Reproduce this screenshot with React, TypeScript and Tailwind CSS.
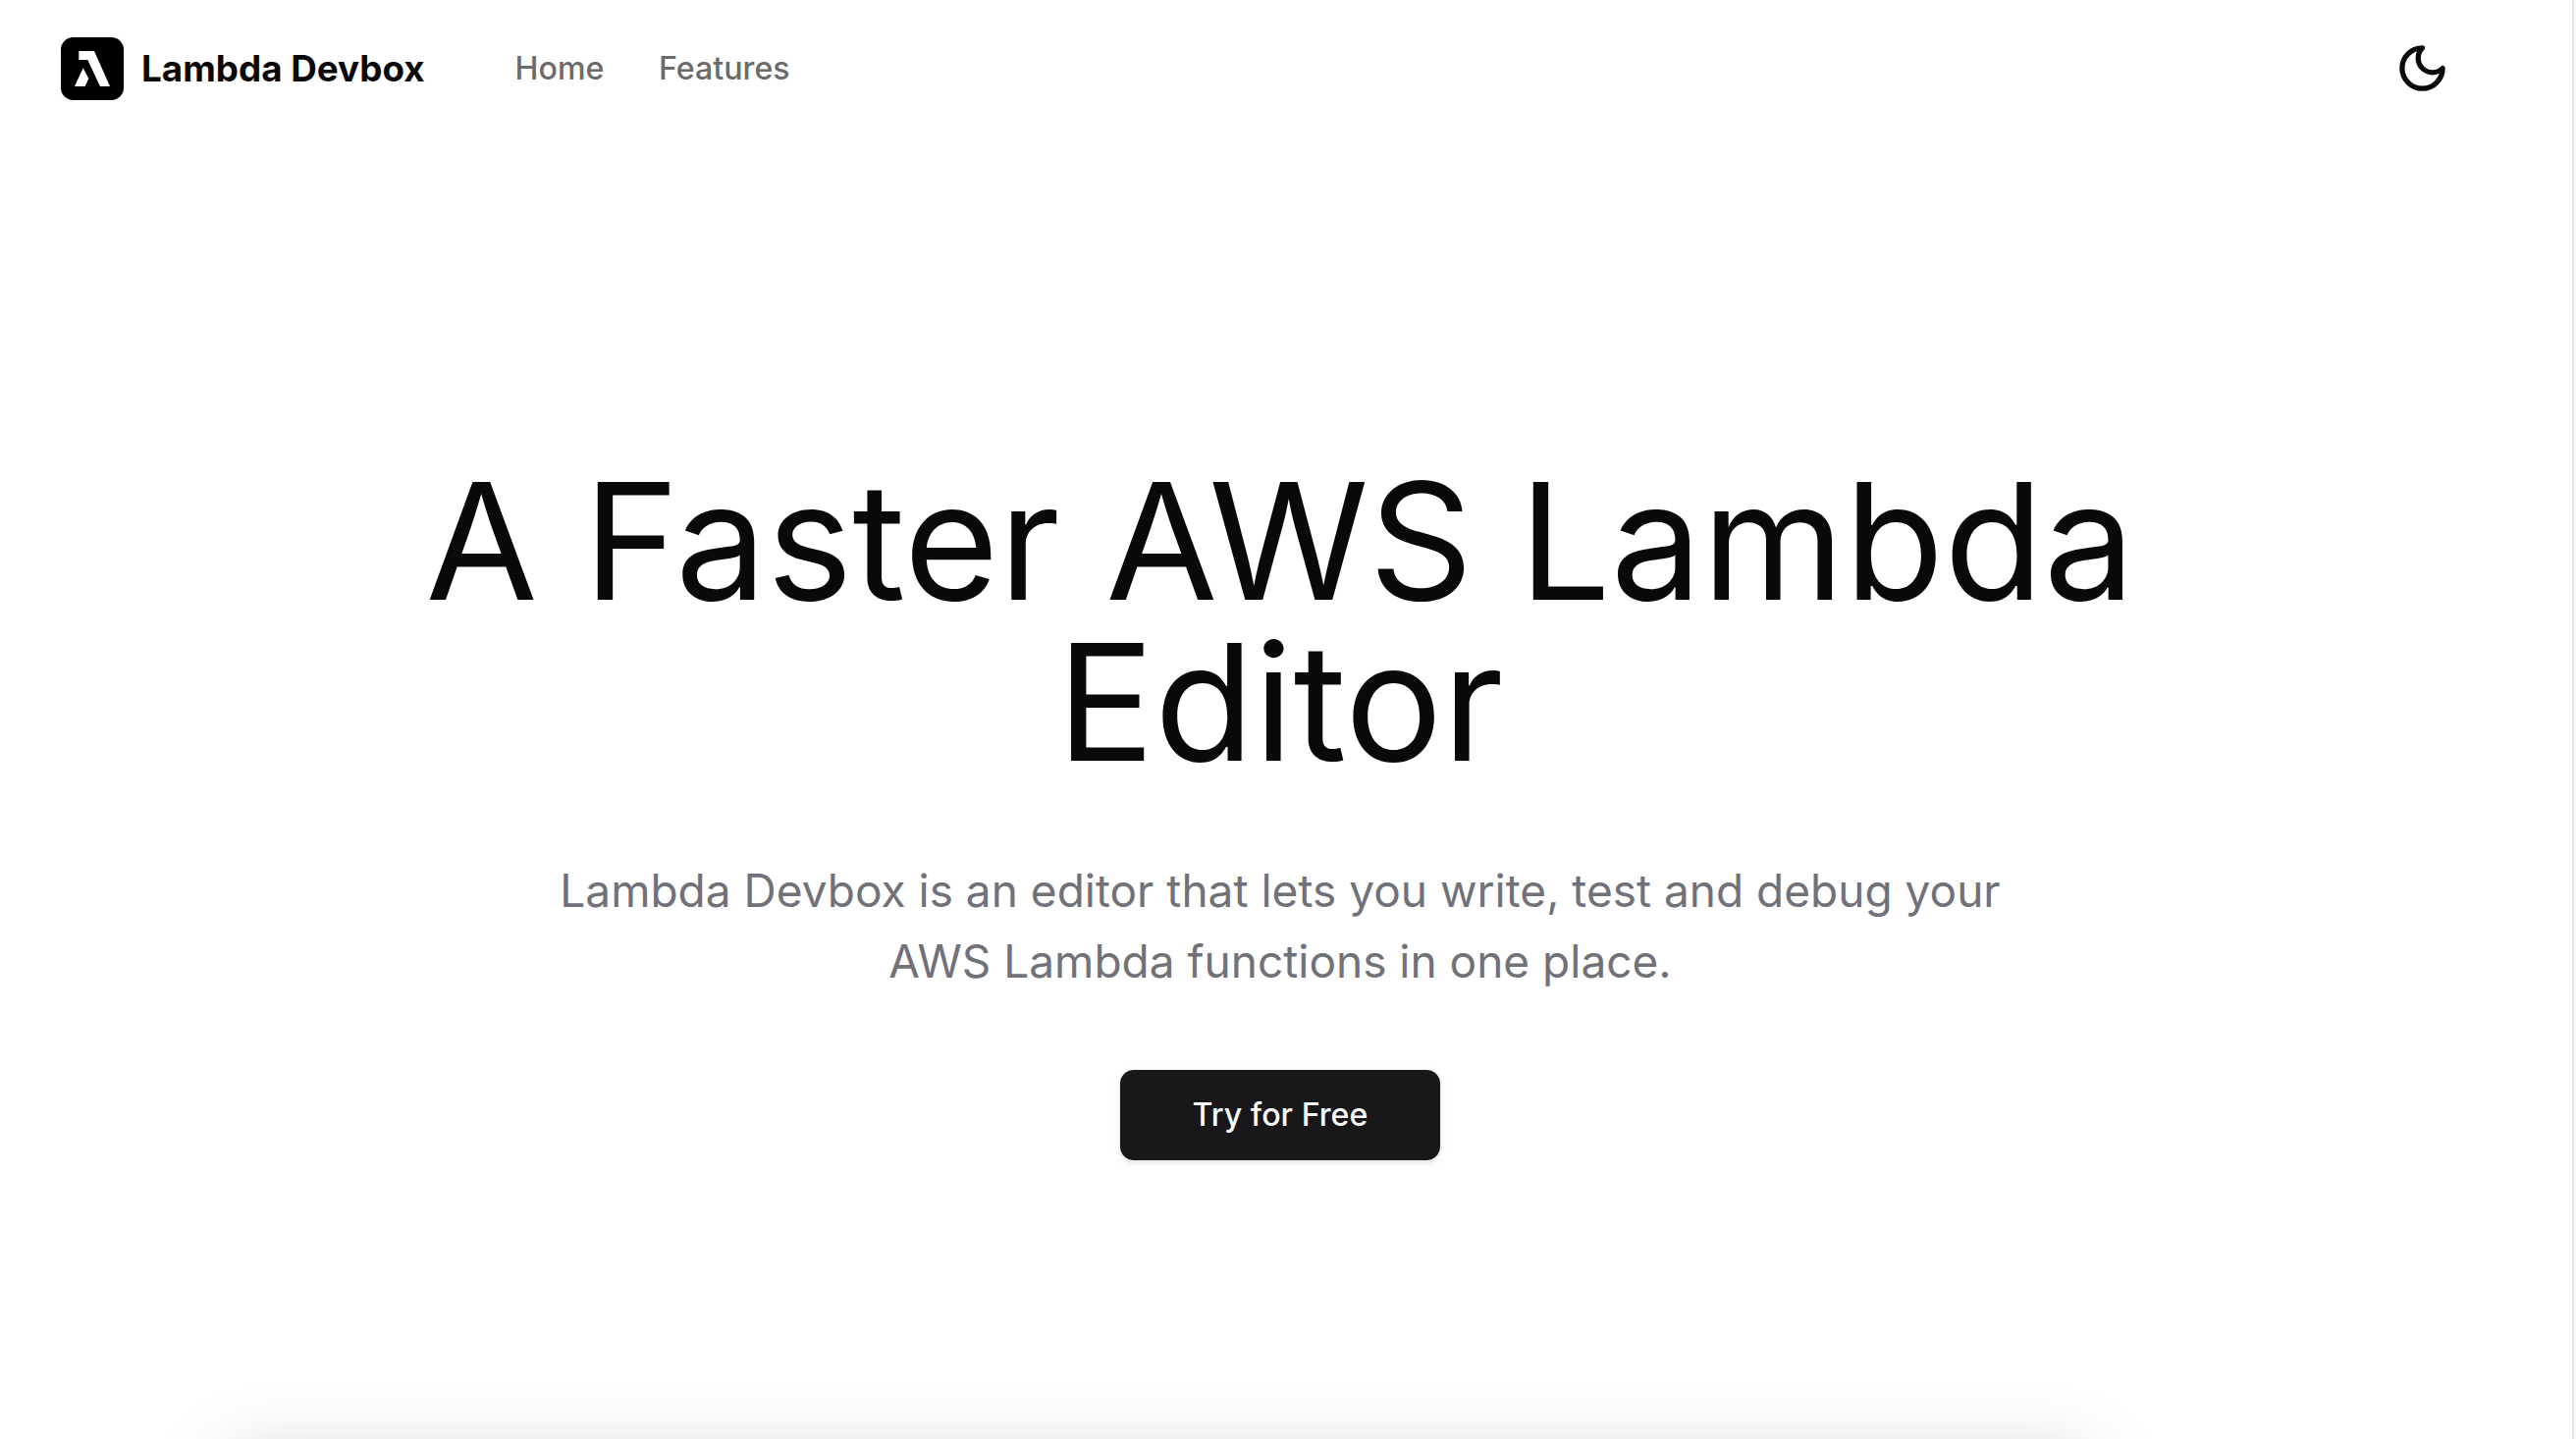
const navItems = ['Home', 'Features'];

function Logo() {
  return (
    <svg className="size-16" viewBox="0 0 64 64">
      <rect width="64" height="64" rx="12.5" fill="#000" />
      <path d="M18.3 14H34l16 36H40L27.3 23h-9z" fill="#fff" />
      <path d="M22.7 31.3L28.3 42l-3.6 8H14z" fill="#fff" />
    </svg>
  );
}

function MoonIcon() {
  return (
    <svg
      className="size-[55px]"
      viewBox="0 0 24 24"
      fill="none"
      stroke="currentColor"
      strokeWidth="2.3"
      strokeLinecap="round"
      strokeLinejoin="round"
    >
      <path d="M12 3a6 6 0 0 0 9 9 9 9 0 1 1-9-9Z" />
    </svg>
  );
}

export default function App() {
  return (
    <div className="flex h-[1466px] w-[2624px] overflow-hidden bg-[#fafafa] font-['Inter','Liberation_Sans',sans-serif] text-[#09090b]">
      <div className="flex h-full w-[2622px] flex-col overflow-hidden border-r-2 border-[#e5e5e5] bg-white">
        <header className="flex h-[140px] shrink-0 items-center pl-[62px] pr-[125px]">
          <div className="flex items-center gap-[18px]">
            <Logo />
            <span className="text-[36.8px] font-bold">Lambda Devbox</span>
          </div>
          <nav className="ml-[92px] flex gap-[55.5px] text-[32.2px] font-medium text-[#6b6b6b]">
            {navItems.map((item) => (
              <a key={item} href="#">{item}</a>
            ))}
          </nav>
          <button className="-mt-0.5 ml-auto" aria-label="Toggle theme">
            <MoonIcon />
          </button>
        </header>
        <main className="flex w-[2608px] flex-col items-center pt-[329px] text-center">
          <h1 className="w-[1800px] text-[165.6px] leading-[164px]">A Faster AWS Lambda Editor</h1>
          <p className="mt-[74px] w-[1500px] text-[46px] leading-[72px] text-[#71717a]">
            Lambda Devbox is an editor that lets you write, test and debug your AWS Lambda functions in one place.
          </p>
          <button className="mt-[75px] h-[92px] w-[326px] rounded-[14px] bg-[#18181b] text-[32.2px] font-medium text-[#fafafa] shadow-[0_2px_7px_rgba(0,0,0,0.12)]">
            Try for Free
          </button>
          {/* preview panel starts below the fold, only its shadow shows */}
          <div className="ml-[236px] mt-[312px] h-[600px] w-[1887px] self-start rounded-[14px] bg-white shadow-[0_0_80px_rgba(0,0,0,0.25)]" />
        </main>
      </div>
    </div>
  );
}
